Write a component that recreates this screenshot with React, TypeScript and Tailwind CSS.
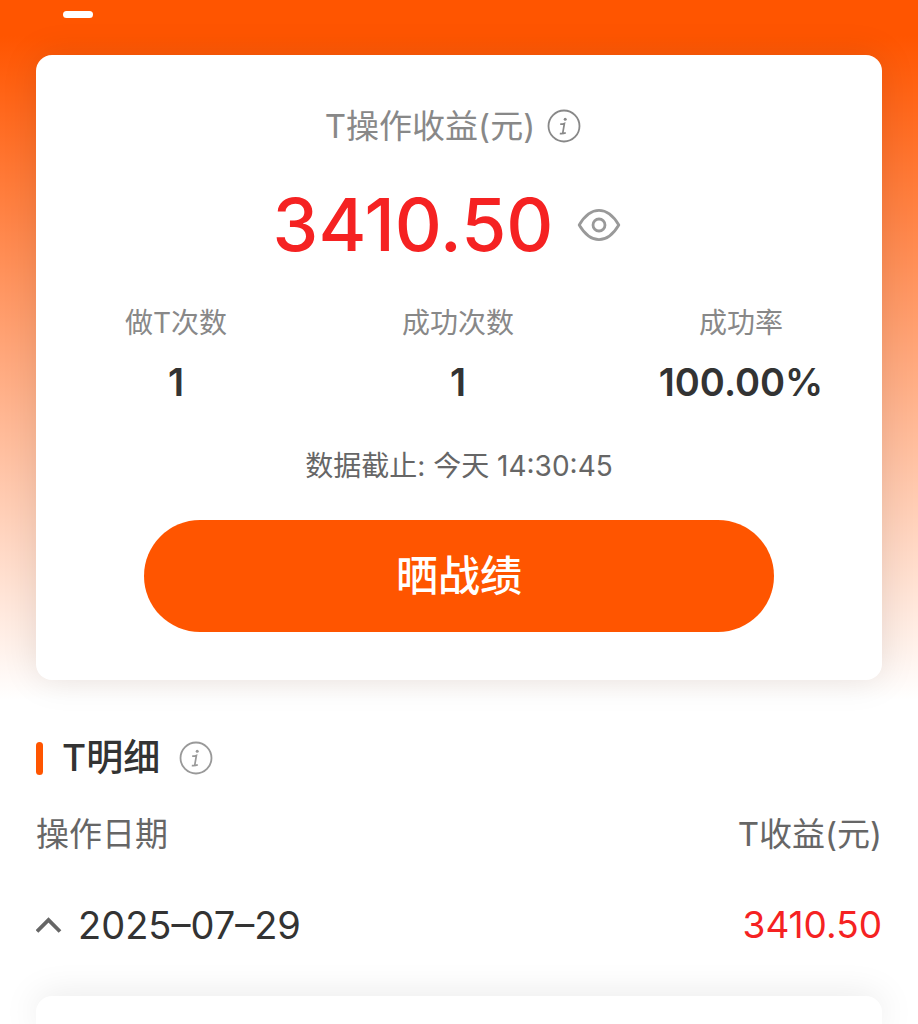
import type { ReactNode } from 'react';

function InfoIcon() {
  return (
    <svg viewBox="0 0 34 34" className="size-[34px]" fill="none" stroke="currentColor" aria-hidden="true">
      <circle cx="17" cy="17" r="15.5" strokeWidth="1.8" />
      <circle cx="18.2" cy="10.2" r="1.5" fill="currentColor" stroke="none" />
      <path d="M13.2 15.200C14.800 15.300 16.200 15 17.400 14.400L15.700 24.300M12.800 24.600C15 24.800 17 24.600 18.800 23.800" strokeWidth="1.7" />
    </svg>
  );
}

function EyeIcon() {
  return (
    <svg viewBox="0 0 44 34" className="h-[34px] w-11" fill="none" stroke="currentColor" strokeWidth="2.8" strokeLinejoin="round" aria-hidden="true">
      <path d="M2.200 17C8 7.200 14.500 2.400 22 2.400S36 7.200 41.800 17C36 26.800 29.500 31.600 22 31.600S8 26.800 2.200 17Z" />
      <circle cx="22" cy="17" r="6" />
    </svg>
  );
}

function ChevronUp() {
  return (
    <svg viewBox="0 0 26 18" className="h-[18px] w-[26px] text-[#666]" fill="none" stroke="currentColor" strokeWidth="3.8" aria-hidden="true">
      <path d="M1 15.500 12.500 4 24 15.500" />
    </svg>
  );
}

function Stat({ label, children }: { label: string; children: ReactNode }) {
  return (
    <div className="flex flex-col items-center gap-[15px]">
      <dt className="text-[28px] leading-10 text-[#888]">{label}</dt>
      <dd className="text-[38px] font-semibold leading-12 text-[#333]">{children}</dd>
    </div>
  );
}

export default function App() {
  return (
    <main className="flex min-h-screen flex-col overflow-hidden bg-white bg-[linear-gradient(to_bottom,#ff5500_36px,#ffffff_700px)] font-['Inter','Noto_Sans_CJK_SC',sans-serif] text-[#333]">
      <nav className="flex h-[55px] items-start px-[63px] pt-[11px]">
        <span className="h-[7px] w-[30px] rounded-full bg-white" />
      </nav>

      <section className="mx-9 flex flex-col items-center rounded-2xl bg-white px-[27px] pt-12 pb-12 shadow-[0_0_36px_rgba(0,0,0,0.1)]">
        <div className="flex items-center gap-3 pr-3 text-[#888]">
          <h1 className="text-[33px] font-normal leading-[46px]">T操作收益(元)</h1>
          <button type="button" aria-label="收益说明"><InfoIcon /></button>
        </div>

        <div className="mt-7 flex items-center gap-6 pr-6">
          <strong className="text-[73px] font-medium leading-[96px] text-[#f52222]">3410.50</strong>
          <button type="button" aria-label="隐藏金额" className="text-[#999]"><EyeIcon /></button>
        </div>

        <dl className="mt-[30px] grid w-full grid-cols-[226px_1fr_228px]">
          <Stat label="做T次数">1</Stat>
          <Stat label="成功次数">1</Stat>
          <Stat label="成功率">100.00%</Stat>
        </dl>

        <p className="mt-10 text-[28px] leading-10 text-[#666]">数据截止: 今天 14:30:45</p>

        <button type="button" className="mt-[34px] h-28 w-full max-w-[630px] rounded-full bg-[#ff5500] text-[42px] font-medium leading-none text-white">
          晒战绩
        </button>
      </section>

      <section className="mx-9 mt-[50px] flex grow flex-col">
        <div className="flex items-center gap-[19px]">
          <span className="h-[33px] w-[7px] rounded-sm bg-[#ff5500]" />
          <h2 className="text-[37px] font-medium leading-14">T明细</h2>
          <button type="button" aria-label="明细说明" className="text-[#999]"><InfoIcon /></button>
        </div>
        <div className="mt-6 flex justify-between text-[33px] leading-12 text-[#666]">
          <span>操作日期</span>
          <span>T收益(元)</span>
        </div>
        <div className="mt-[39px] flex items-center justify-between leading-14">
          <button type="button" aria-expanded="true" className="flex items-center gap-4 text-[38px]">
            <ChevronUp />
            2025–07–29
          </button>
          <span className="text-[37px] text-[#f52222]">3410.50</span>
        </div>
        <div className="mt-[43px] min-h-7 grow rounded-t-2xl bg-white shadow-[0_0_36px_rgba(0,0,0,0.1)]" />
      </section>
    </main>
  );
}
